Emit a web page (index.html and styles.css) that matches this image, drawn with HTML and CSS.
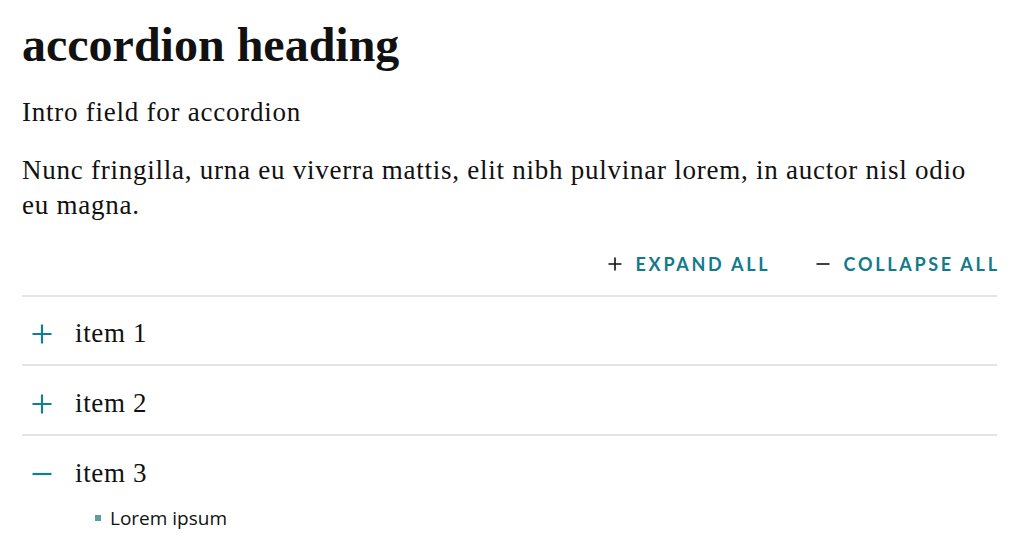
FILE: index.html
```html
<!DOCTYPE html>
<html lang="en">
<head>
<meta charset="utf-8">
<title>accordion heading</title>
<link rel="stylesheet" href="styles.css">
</head>
<body>
<main class="page">
  <h1 class="title">accordion heading</h1>
  <p class="intro">Intro field for accordion</p>
  <p class="body-text">Nunc fringilla, urna eu viverra mattis, elit nibh pulvinar lorem, in auctor nisl odio eu magna.</p>
  <div class="controls">
    <button class="ctrl" type="button">
      <svg class="ctrl-icon" viewBox="0 0 14 14" width="14" height="14"><path d="M7 0.5V13.5M0.5 7H13.5" stroke="#111" stroke-width="1.6" fill="none"/></svg>
      <span class="ctrl-label">Expand all</span>
    </button>
    <button class="ctrl" type="button">
      <svg class="ctrl-icon" viewBox="0 0 14 14" width="14" height="14"><path d="M0.5 7H13.5" stroke="#111" stroke-width="1.6" fill="none"/></svg>
      <span class="ctrl-label">Collapse all</span>
    </button>
  </div>
  <ul class="accordion">
    <li class="acc-item">
      <div class="acc-head">
        <svg class="acc-icon" viewBox="0 0 20 20" width="20" height="20"><path d="M10 0.5V19.5M0.5 10H19.5" stroke="#137f8e" stroke-width="2.2" fill="none"/></svg>
        <span class="acc-title">item 1</span>
      </div>
    </li>
    <li class="acc-item">
      <div class="acc-head">
        <svg class="acc-icon" viewBox="0 0 20 20" width="20" height="20"><path d="M10 0.5V19.5M0.5 10H19.5" stroke="#137f8e" stroke-width="2.2" fill="none"/></svg>
        <span class="acc-title">item 2</span>
      </div>
    </li>
    <li class="acc-item open">
      <div class="acc-head">
        <svg class="acc-icon" viewBox="0 0 20 20" width="20" height="20"><path d="M0.5 10H19.5" stroke="#137f8e" stroke-width="2.2" fill="none"/></svg>
        <span class="acc-title">item 3</span>
      </div>
      <ul class="acc-body">
        <li class="bullet">Lorem ipsum</li>
      </ul>
    </li>
  </ul>
</main>
</body>
</html>
```
FILE: styles.css
```css
* { box-sizing: border-box; }
html, body { margin: 0; padding: 0; background: #fff; }
body { color: #111; font-family: "Liberation Serif", "Times New Roman", serif; }
.page { padding: 17px 27px 0 22px; }
.title {
  margin: 0;
  font-size: 48px;
  line-height: 56px;
  font-weight: 700;
}
.intro {
  margin: 22px 0 0;
  font-size: 27px;
  line-height: 35px;
  letter-spacing: 0.75px;
}
.body-text {
  margin: 23px 0 0;
  font-size: 27px;
  line-height: 35px;
  letter-spacing: 0.75px;
}
.controls {
  margin-top: 29px;
  padding-bottom: 19px;
  display: flex;
  justify-content: flex-end;
  gap: 48px;
  border-bottom: 2px solid #e4e4e4;
}
.ctrl {
  display: flex;
  align-items: center;
  gap: 14px;
  padding: 0;
  border: 0;
  background: none;
  font-family: "Lato", "Liberation Sans", sans-serif;
  font-weight: 700;
  font-size: 18px;
  line-height: 24px;
  letter-spacing: 2.7px;
  text-transform: uppercase;
  color: #117b8b;
}
.ctrl-label { margin-right: -2.7px; }
.accordion { list-style: none; margin: 0; padding: 0; }
.acc-item { border-bottom: 2px solid #e4e4e4; }
.acc-item.open { border-bottom: 0; }
.acc-head {
  display: flex;
  align-items: center;
  gap: 23px;
  padding: 19px 0 13px 10px;
}
.acc-item + .acc-item .acc-head { padding-top: 20px; }
.acc-icon { flex: none; }
.acc-title { font-size: 27px; line-height: 35px; letter-spacing: 0.65px; }
.acc-body {
  list-style: none;
  margin: 0;
  padding: 2px 0 0 73px;
  font-family: "Open Sans", "Liberation Sans", sans-serif;
  font-size: 19px;
  line-height: 24px;
}
.bullet { display: flex; align-items: center; gap: 9px; }
.bullet::before {
  content: "";
  width: 6px;
  height: 6px;
  background: #5c9ea0;
  flex: none;
}
```
